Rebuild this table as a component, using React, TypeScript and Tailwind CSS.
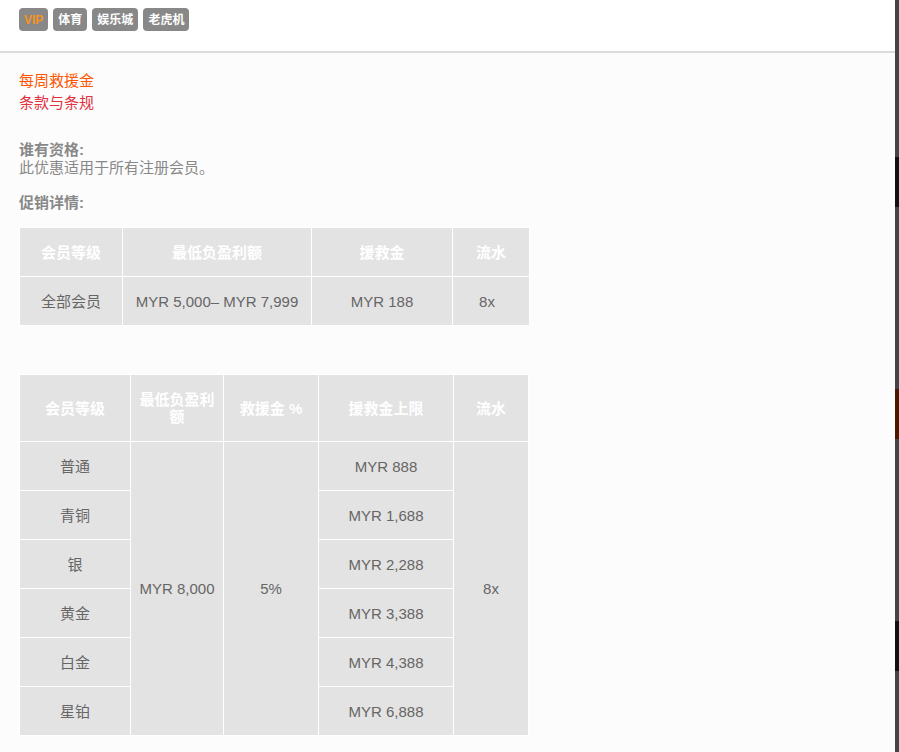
import React from 'react';

const font = { fontFamily: '"Liberation Sans", Arial, "Noto Sans CJK SC", sans-serif' };

const tags = ['VIP', '体育', '娱乐城', '老虎机'];

const tiers = [
  { name: '普通', cap: 'MYR 888' },
  { name: '青铜', cap: 'MYR 1,688' },
  { name: '银', cap: 'MYR 2,288' },
  { name: '黄金', cap: 'MYR 3,388' },
  { name: '白金', cap: 'MYR 4,388' },
  { name: '星铂', cap: 'MYR 6,888' },
];

export default function App() {
  const th = 'border border-white bg-[#e3e3e3] text-white font-bold text-[15px] leading-[17px] text-center align-middle px-[8px]';
  const td = 'border border-white bg-[#e3e3e3] text-[#666] text-[15px] leading-[17px] text-center align-middle px-[4px]';

  return (
    <div className="w-[899px] h-[752px] flex overflow-hidden bg-[#fcfcfc]" style={font}>
      <div className="flex-1 flex flex-col">
        {/* Top tags */}
        <div className="bg-white h-[51px] flex items-start gap-[5px] pl-[19px] pt-[8px]">
          {tags.map((t) => (
            <span
              key={t}
              className={`h-[23px] px-[5px] rounded-[4px] bg-[#888] text-[12px] font-bold flex items-center ${t === 'VIP' ? 'text-[#f7941d]' : 'text-white'}`}
            >
              {t}
            </span>
          ))}
        </div>
        <div className="h-[2px] bg-[#dcdcdc]" />

        <div className="pl-[19px] pt-[17px]">
          <div className="text-[15px] leading-[22px] text-[#ff5500]">每周救援金</div>
          <div className="text-[15px] leading-[22px] text-[#e2313f]">条款与条规</div>

          <div className="mt-[27px] text-[15px] leading-[18px] text-[#888] font-bold">谁有资格:</div>
          <div className="text-[15px] leading-[18px] text-[#888]">此优惠适用于所有注册会员。</div>

          <div className="mt-[17px] text-[15px] leading-[18px] text-[#888] font-bold">促销详情:</div>

          {/* Table 1 */}
          <table className="mt-[15px] border-collapse table-fixed w-[510px]">
            <colgroup>
              <col className="w-[103px]" />
              <col className="w-[189px]" />
              <col className="w-[141px]" />
              <col className="w-[77px]" />
            </colgroup>
            <thead>
              <tr className="h-[49px]">
                <th className={th}>会员等级</th>
                <th className={th}>最低负盈利额</th>
                <th className={th}>援救金</th>
                <th className={th}>流水</th>
              </tr>
            </thead>
            <tbody>
              <tr className="h-[49px]">
                <td className={td}>全部会员</td>
                <td className={td}>MYR 5,000– MYR 7,999</td>
                <td className={td}>MYR 188</td>
                <td className={`${td} pr-[12px]`}>8x</td>
              </tr>
            </tbody>
          </table>

          {/* Table 2 */}
          <table className="mt-[48px] border-collapse table-fixed w-[509px]">
            <colgroup>
              <col className="w-[111px]" />
              <col className="w-[93px]" />
              <col className="w-[95px]" />
              <col className="w-[135px]" />
              <col className="w-[75px]" />
            </colgroup>
            <thead>
              <tr className="h-[67px]">
                <th className={th}>会员等级</th>
                <th className={th}>最低负盈利额</th>
                <th className={th}>救援金 %</th>
                <th className={th}>援救金上限</th>
                <th className={th}>流水</th>
              </tr>
            </thead>
            <tbody>
              {tiers.map((r, i) => (
                <tr key={r.name} className="h-[49px]">
                  <td className={td}>{r.name}</td>
                  {i === 0 && (
                    <>
                      <td className={td} rowSpan={6}>MYR 8,000</td>
                      <td className={td} rowSpan={6}>5%</td>
                    </>
                  )}
                  <td className={td}>{r.cap}</td>
                  {i === 0 && (
                    <td className={td} rowSpan={6}>8x</td>
                  )}
                </tr>
              ))}
            </tbody>
          </table>
        </div>
      </div>

      {/* Right edge strip */}
      <div className="w-[4px] flex flex-col bg-[#444]">
        <div className="h-[157px]" />
        <div className="h-[50px] bg-[#111]" />
        <div className="h-[182px]" />
        <div className="h-[50px] bg-[#4a1800]" />
        <div className="h-[182px]" />
        <div className="h-[50px] bg-[#111]" />
      </div>
    </div>
  );
}
